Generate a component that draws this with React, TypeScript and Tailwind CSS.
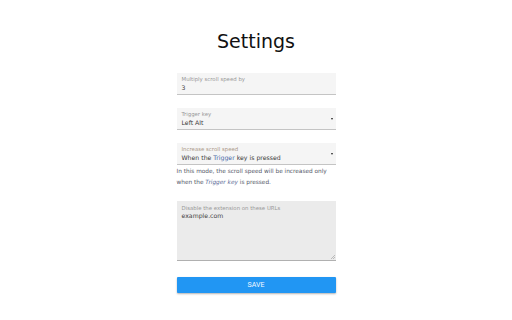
import React from 'react';

const font = { fontFamily: '"DejaVu Sans", Verdana, sans-serif' };

type FieldProps = {
  label: string;
  children: React.ReactNode;
  select?: boolean;
  labelClass?: string;
};

const Field: React.FC<FieldProps> = ({ label, children, select, labelClass }) => {
  return <div className="relative h-[22px] bg-[#f5f5f5] border-b border-[#c4c4c4] pl-[5px] pt-[3px]">
      <div className={`text-[5.4px] leading-[7px] ${labelClass ?? 'text-[#999]'}`}>{label}</div>
      <div className="text-[6.2px] leading-[9px] text-[#3a3a3a]">{children}</div>
      {select && <div className="absolute right-[3px] top-[10px] w-0 h-0 border-l-[1.5px] border-r-[1.5px] border-t-[2px] border-l-transparent border-r-transparent border-t-[#222]"></div>}
    </div>;
};

export default function App() {
  return <div className="min-h-[320px] bg-white" style={font}>
      <div className="w-[159px] mx-auto pt-[30px]">
        <h1 className="text-center text-[19px] leading-[22px] text-[#111] font-normal">Settings</h1>

        <div className="mt-[21px] flex flex-col gap-[13px]">
          <Field label="Multiply scroll speed by">3</Field>
          <Field label="Trigger key" select>Left Alt</Field>
          <div>
            <Field label="Increase scroll speed" select labelClass="text-[#ab9888]">
              When the <span className="text-[#4a68a5]">Trigger</span> key is pressed
            </Field>
            <p className="mt-[1px] text-[5.8px] leading-[10.5px] text-[#545868]">
              In this mode, the scroll speed will be increased only
              <br />
              when the <i className="text-[#5a6a96]">Trigger key</i> is pressed.
            </p>
          </div>
        </div>

        <div className="relative mt-[14px] h-[60px] bg-[#ebebeb] border-b border-[#b0b0b0] pl-[5px] pt-[4px]">
          <div className="text-[5.4px] leading-[7px] text-[#999]">Disable the extension on these URLs</div>
          <div className="text-[6.2px] leading-[8px] text-[#444]">example.com</div>
          <svg className="absolute right-[1px] bottom-[1px]" width="4" height="4" viewBox="0 0 4 4">
            <path d="M4 0L0 4M4 2L2 4" stroke="#999" strokeWidth="0.6" />
          </svg>
        </div>

        <button className="mt-[16px] w-full h-[16px] rounded-[1px] bg-[#2196f3] text-[#f4f9ff] text-[7px] font-normal shadow-[0_1px_2px_rgba(0,0,0,0.3)]" style={{ fontFamily: 'Roboto, "Liberation Sans", sans-serif' }}>
          SAVE
        </button>
      </div>
    </div>;
}
